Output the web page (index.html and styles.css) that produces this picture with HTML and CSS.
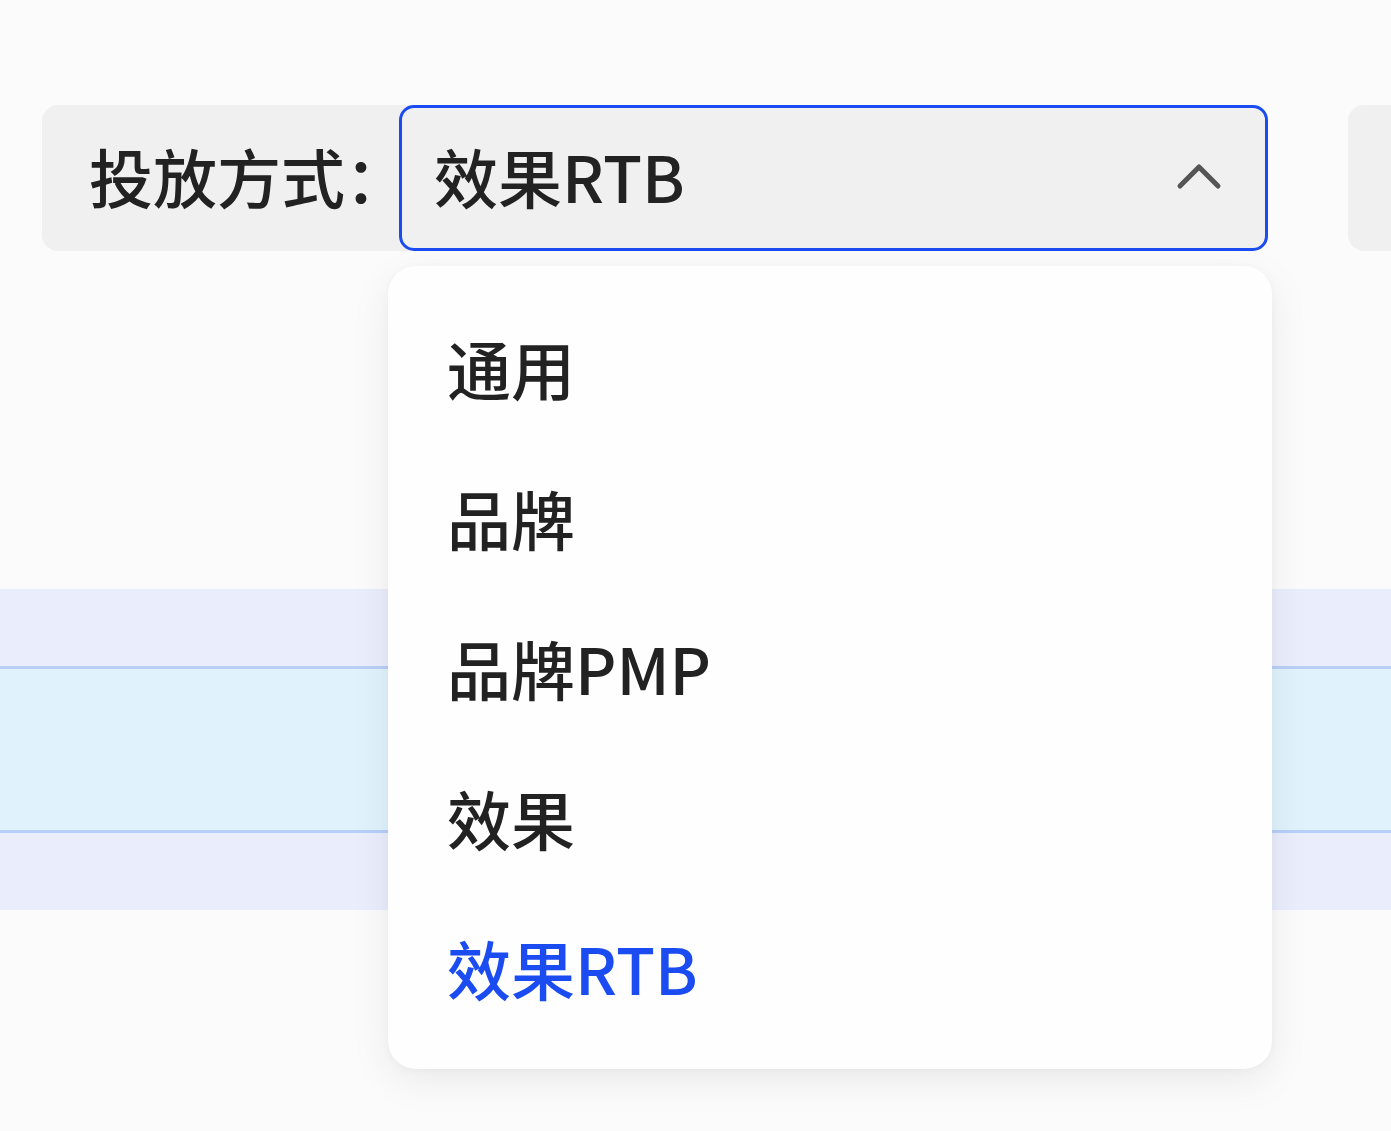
FILE: index.html
```html
<!DOCTYPE html>
<html lang="zh-CN">
<head>
    <meta charset="UTF-8">
    <meta name="viewport" content="width=device-width, initial-scale=1.0">
    <title>投放方式</title>
    <link rel="stylesheet" href="styles.css">
</head>
<body>
    <div class="filter-bar">
        <div class="filter-item">
            <label class="filter-label">投放方式：</label>
            <div class="select-wrap">
                <div class="select is-open">
                    <span class="select-value">效果RTB</span>
                    <svg class="select-arrow" width="48" height="30" viewBox="0 0 48 30">
                        <path d="M5 24 L24 5 L43 24" fill="none" stroke="#555" stroke-width="5" stroke-linecap="round" stroke-linejoin="round"/>
                    </svg>
                </div>

                <!-- 下拉选项 -->
                <ul class="dropdown">
                    <li class="option">通用</li>
                    <li class="option">品牌</li>
                    <li class="option">品牌PMP</li>
                    <li class="option">效果</li>
                    <li class="option selected">效果RTB</li>
                </ul>
            </div>
        </div>
        <div class="filter-item filter-item-next"></div>
    </div>

    <div class="table-band">
        <div class="row"></div>
        <div class="row row-active"></div>
        <div class="row"></div>
    </div>
</body>
</html>
```

FILE: styles.css
```css
* {
    margin: 0;
    padding: 0;
    box-sizing: border-box;
}

body {
    font-family: "Noto Sans CJK SC", "Noto Sans", sans-serif;
    background-color: #fbfbfb;
    color: #222;
    min-height: 100vh;
    overflow: hidden;
}

.filter-bar {
    display: flex;
    gap: 80px;
    padding: 105px 0 0 42px;
}

.filter-item {
    display: flex;
    align-items: center;
    width: 1226px;
    height: 146px;
    flex-shrink: 0;
    background: #f0f0f0;
    border-radius: 16px;
}

.filter-item-next {
    width: auto;
    flex: 1;
    min-width: 0;
    border-radius: 16px 0 0 16px;
}

.filter-label {
    width: 357px;
    padding-left: 47px;
    padding-bottom: 6px;
    font-size: 64px;
    font-weight: 500;
    line-height: 1;
    white-space: nowrap;
    color: #222;
    flex-shrink: 0;
}

.select-wrap {
    position: relative;
    flex: 1;
    height: 146px;
}

.select {
    display: flex;
    align-items: center;
    justify-content: space-between;
    height: 146px;
    padding: 0 42px 0 32px;
    background: #f0f0f0;
    border: 3px solid #1a4cf2;
    border-radius: 15px;
}

.select-value {
    padding-bottom: 6px;
    font-size: 64px;
    font-weight: 500;
    line-height: 1;
    color: #222;
}

.select-arrow {
    display: block;
    margin-top: -2px;
}

.dropdown {
    position: absolute;
    top: 161px;
    left: -11px;
    width: 884px;
    list-style: none;
    padding: 30px 0 23px;
    background: #fefefe;
    border-radius: 28px;
    box-shadow: 0 12px 40px rgba(0,0,0,0.07), 0 2px 8px rgba(0,0,0,0.03);
    z-index: 10;
}

.option {
    display: flex;
    align-items: center;
    height: 150px;
    padding-left: 59px;
    padding-bottom: 8px;
    font-size: 64px;
    font-weight: 500;
    line-height: 1;
    color: #222;
}

.option.selected {
    color: #1a4cf2;
}

.table-band {
    margin-top: 338px;
}

.row {
    height: 77px;
    background: #eaeefc;
}

.row-active {
    height: 167px;
    background: #e0f3fc;
    border-top: 3px solid #b9cff8;
    border-bottom: 3px solid #b9cff8;
}
```
